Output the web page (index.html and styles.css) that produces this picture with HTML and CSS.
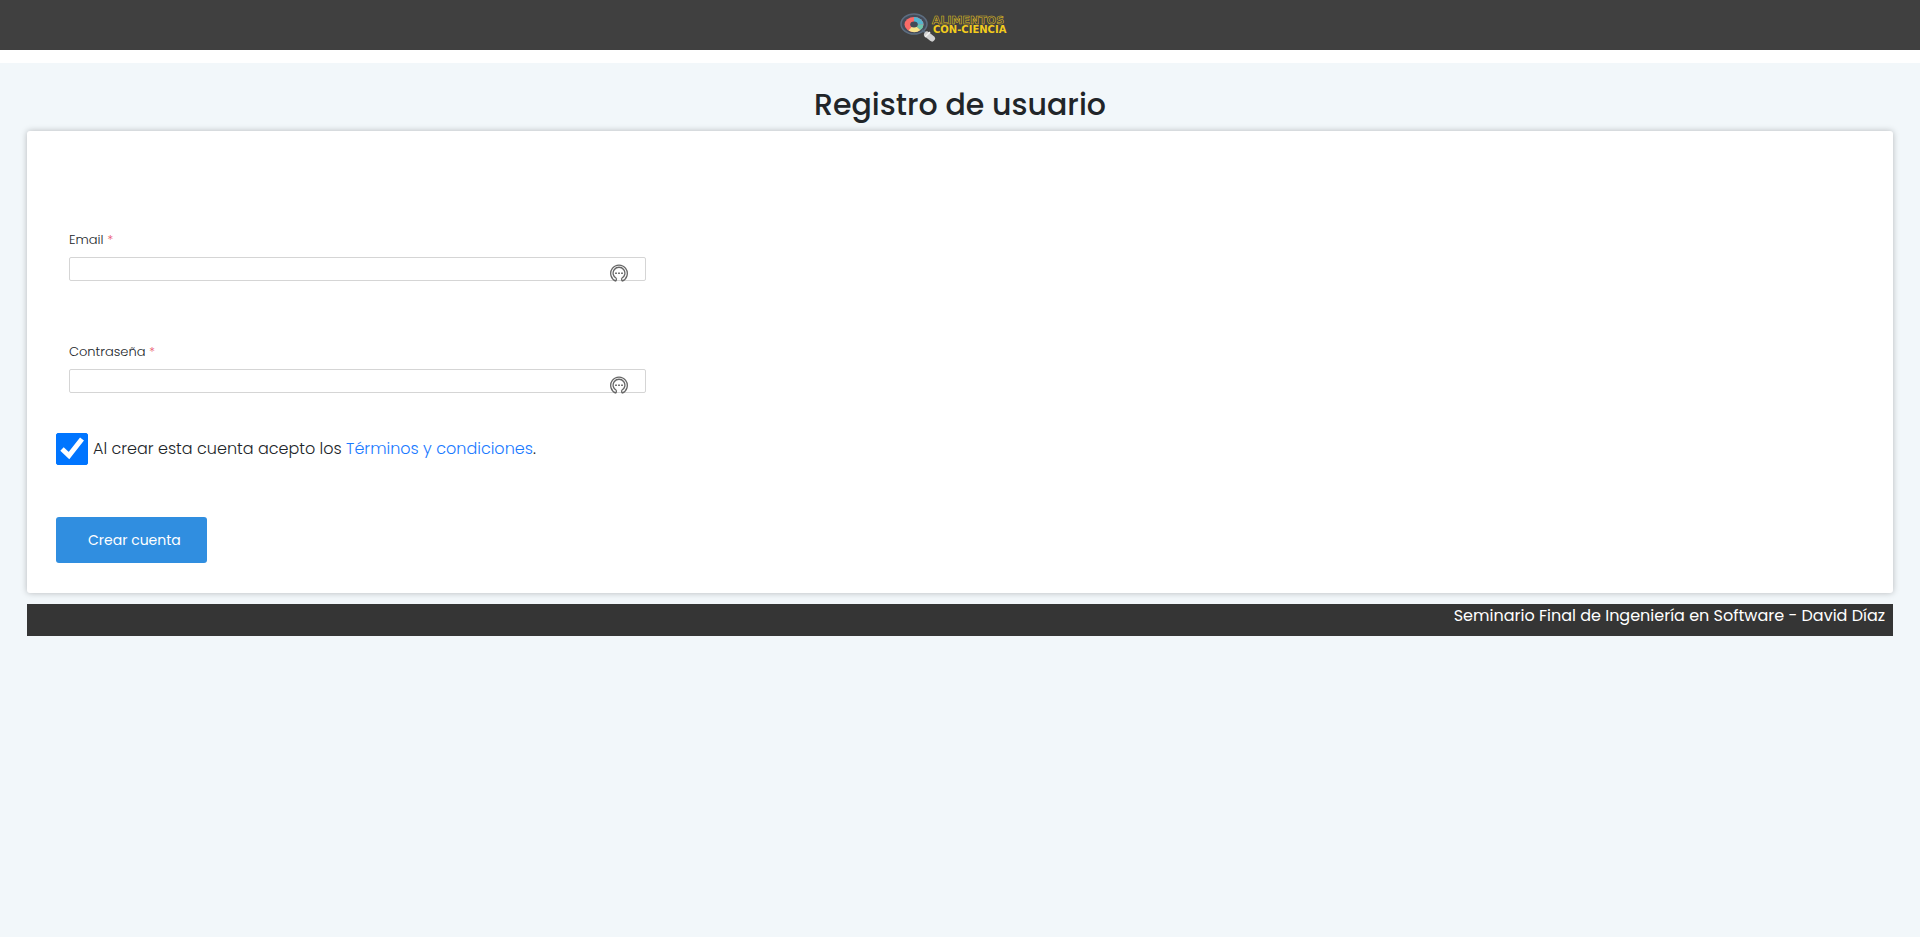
FILE: index.html
```html
<!DOCTYPE html>
<html lang="es">
<head>
  <meta charset="utf-8">
  <meta name="viewport" content="width=device-width, initial-scale=1">
  <title>Registro de usuario</title>
  <link rel="stylesheet" href="styles.css">
</head>
<body>
  <header class="topbar">
    <svg class="logo" viewBox="0 0 120 30" role="img" aria-label="Alimentos Con-Ciencia">
      <ellipse cx="14" cy="11" rx="13" ry="10" fill="#454b58" stroke="#5c6d80" stroke-width="1.500"/>
      <path d="M22 17l4 3" stroke="#596a7c" stroke-width="2"/>
      <ellipse cx="14" cy="11.500" rx="9.500" ry="7.500" fill="#fa6b68"/>
      <path d="M14 11.500L8.500 17.500a9.500 7.500 0 0 0 12-.5z" fill="#f8e48c"/>
      <path d="M14 11.500l6.500 5.500a9.500 7.500 0 0 0 3-5.500z" fill="#6cc7ac"/>
      <path d="M14 11.500V4a9.500 7.500 0 0 1 9.500 7.500z" fill="#55b5d0"/>
      <ellipse cx="14" cy="11.500" rx="3.800" ry="3" fill="#454b58"/>
      <path d="M27 21.500l5 4" stroke="#d2d2d2" stroke-width="6" stroke-linecap="round"/>
      <path d="M25 24l5-5" stroke="#f4f4f4" stroke-width="1.500"/>
      <text class="logo-line logo-outline" x="32" y="11">ALIMENTOS</text>
      <text class="logo-line logo-solid" x="33" y="20">CON-CIENCIA</text>
    </svg>
  </header>

  <main class="page">
    <h1 class="title">Registro de usuario</h1>
    <form class="card">
      <div class="field">
        <label class="field-label" for="email">Email <span class="required">*</span></label>
        <div class="control">
          <input class="input" id="email" type="email">
          <svg class="autofill" viewBox="0 0 18 18" aria-hidden="true">
            <path d="M6 17.200a8.300 8.300 0 1 1 6 0M6.500 14.500a5.900 5.900 0 1 1 5 0M6.500 14.500L6 17.200M11.500 14.500l.5 2.700" fill="none" stroke="#666" stroke-width="1.300"/>
            <path d="M5 8.500h2v1.500H5zM8 8.500h2v1.500H8zM11 8.500h2v1.500h-2z" fill="#777"/>
          </svg>
        </div>
      </div>
      <div class="field">
        <label class="field-label" for="password">Contraseña <span class="required">*</span></label>
        <div class="control">
          <input class="input" id="password" type="password">
          <svg class="autofill" viewBox="0 0 18 18" aria-hidden="true">
            <path d="M6 17.200a8.300 8.300 0 1 1 6 0M6.500 14.500a5.900 5.900 0 1 1 5 0M6.500 14.500L6 17.200M11.500 14.500l.5 2.700" fill="none" stroke="#666" stroke-width="1.300"/>
            <path d="M5 8.500h2v1.500H5zM8 8.500h2v1.500H8zM11 8.500h2v1.500h-2z" fill="#777"/>
          </svg>
        </div>
      </div>
      <div class="terms">
        <span class="check">
          <input class="checkbox" id="terms" type="checkbox" checked>
          <svg class="tick" viewBox="0 0 32 32" aria-hidden="true">
            <path d="M6 16l7 6.500L26 6" fill="none" stroke="#fff" stroke-width="5"/>
          </svg>
        </span>
        <label for="terms">Al crear esta cuenta acepto los <a class="link" href="#">Términos y condiciones</a>.</label>
      </div>
      <button class="submit" type="submit">Crear cuenta</button>
    </form>
    <footer class="footer">Seminario Final de Ingeniería en Software - David Díaz</footer>
  </main>
</body>
</html>
```
FILE: styles.css
```css
* {
  box-sizing: border-box;
}

body {
  margin: 0;
  min-height: 100vh;
  display: flex;
  flex-direction: column;
  background: #fff;
  color: #212529;
  font: 16px/24px Poppins, Inter, sans-serif;
}

.topbar {
  display: flex;
  justify-content: center;
  margin-bottom: 13px;
  padding: 13px 0 7px;
  background: #404040;
}

.logo {
  width: 120px;
  height: 30px;
}

.logo-line {
  font-family: "DejaVu Sans", sans-serif;
  font-weight: 700;
}

.logo-outline {
  font-size: 11px;
  fill: #404040;
  stroke: #d9b622;
  stroke-width: 0.6px;
}

.logo-solid {
  font-size: 10px;
  fill: #f3cc1d;
}

.page {
  flex: 1;
  padding: 22px 27px;
  background: #f2f7fa;
}

.title {
  margin: 0 0 6px;
  font-size: 30px;
  font-weight: 500;
  line-height: 40px;
  text-align: center;
}

.card {
  padding: 97px 29px 30px;
  border-radius: 3px;
  background: #fff;
  box-shadow: 0 0 6px rgba(0, 0, 0, 0.25);
}

.field {
  width: 31.9%;
  min-width: 280px;
  margin: 0 0 59px 13px;
}

.field-label {
  display: block;
  margin-bottom: 5px;
  font-size: 13px;
  font-weight: 300;
}

.required {
  color: #e9546b;
}

.control {
  position: relative;
  display: flex;
}

.input {
  width: 100%;
  height: 24px;
  padding: 0 48px 0 8px;
  border: 1px solid #d5d5d5;
  border-radius: 2px;
  background: #fff;
  font: inherit;
}

.autofill {
  position: absolute;
  top: 7px;
  right: 18px;
  width: 18px;
  height: 18px;
}

.terms {
  display: flex;
  align-items: center;
  gap: 5px;
  margin: -19px 0 52px;
  font-weight: 300;
}

.check {
  position: relative;
  display: flex;
}

.checkbox {
  appearance: none;
  width: 32px;
  height: 32px;
  margin: 0;
  border: 1px solid #767676;
  border-radius: 2px;
  background: #fff;
}

.checkbox:checked {
  border-color: #0075ff;
  background: #0075ff;
}

.tick {
  position: absolute;
  inset: 0;
  pointer-events: none;
}

.link {
  color: #1a7aff;
  text-decoration: none;
}

.submit {
  display: block;
  padding: 11px 26px 11px 32px;
  border: 0;
  border-radius: 3px;
  background: #308ee0;
  color: #fff;
  font: inherit;
  font-size: 14px;
}

.footer {
  margin-top: 11px;
  padding: 0 8px 8px;
  background: #353535;
  color: #fff;
  text-align: right;
}
```
